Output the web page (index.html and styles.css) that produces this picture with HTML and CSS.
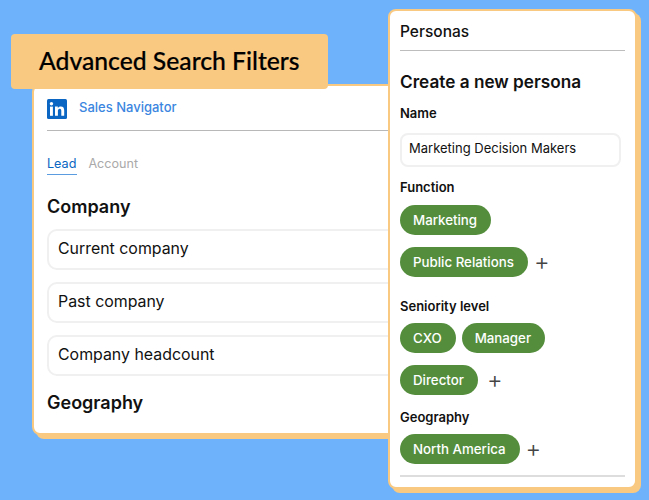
FILE: index.html
```html
<!DOCTYPE html>
<html lang="en">
<head>
    <meta charset="UTF-8" />
    <title>Advanced Search Filters</title>
    <link rel="stylesheet" href="styles.css">
</head>
<body>
    <div class="canvas">
        <!-- Search card, behind the others -->
        <section class="card search-card">
            <div class="brand">
                <svg class="logo" viewBox="0 0 20 20" width="20" height="20">
                    <rect width="20" height="20" rx="1.5" fill="#0a66c2" />
                    <rect x="3" y="7.6" width="2.9" height="9.2" fill="#fff" />
                    <circle cx="4.45" cy="4.7" r="1.7" fill="#fff" />
                    <path d="M8 7.6h2.8v1.3c.5-.9 1.6-1.5 3-1.5 2.6 0 3.4 1.6 3.4 4.1v5.3h-2.9v-4.8c0-1.2-.3-2.2-1.5-2.2-1.3 0-1.9 1-1.9 2.2v4.8H8z" fill="#fff" />
                </svg>
                <span class="brand-name">Sales Navigator</span>
            </div>
            <div class="tabs">
                <span class="tab active">Lead</span>
                <span class="tab">Account</span>
            </div>
            <h2 class="group-title">Company</h2>
            <div class="filter-row">Current company</div>
            <div class="filter-row">Past company</div>
            <div class="filter-row">Company headcount</div>
            <h2 class="group-title geo-title">Geography</h2>
        </section>

        <div class="banner">Advanced Search Filters</div>

        <!-- Persona form -->
        <section class="card persona-card">
            <div class="persona-head">Personas</div>
            <h2 class="persona-title">Create a new persona</h2>
            <div class="label">Name</div>
            <div class="name-input">Marketing Decision Makers</div>

            <div class="label function-label">Function</div>
            <div class="pills function-pills">
                <div class="pill-row">
                    <span class="pill">Marketing</span>
                </div>
                <div class="pill-row">
                    <span class="pill">Public Relations</span>
                    <span class="plus">+</span>
                </div>
            </div>

            <div class="label seniority-label">Seniority level</div>
            <div class="pills">
                <div class="pill-row">
                    <span class="pill">CXO</span>
                    <span class="pill">Manager</span>
                </div>
                <div class="pill-row">
                    <span class="pill">Director</span>
                    <span class="plus plus-wide">+</span>
                </div>
            </div>

            <div class="label geo-label">Geography</div>
            <div class="pills">
                <div class="pill-row">
                    <span class="pill">North America</span>
                    <span class="plus">+</span>
                </div>
            </div>
            <div class="persona-foot"></div>
        </section>
    </div>
</body>
</html>
```

FILE: styles.css
```css
body {
    margin: 0;
    background-color: #6eb2fb;
    font-family: Inter, "Liberation Sans", sans-serif;
    color: #111;
}

.canvas {
    position: relative;
    width: 649px;
    height: 500px;
    overflow: hidden;
}

.card {
    position: absolute;
    box-sizing: border-box;
    background-color: white;
    border: 2px solid #f9c981;
    border-radius: 8px;
    box-shadow: 4px 4px 0 #f9c981;
}

.search-card {
    left: 32px;
    top: 84px;
    width: 400px;
    height: 351px;
    padding: 0 0 0 13px;
}

.banner {
    position: absolute;
    left: 11px;
    top: 34px;
    width: 317px;
    height: 55px;
    box-sizing: border-box;
    padding: 12px 0 0 28px;
    background-color: #f9c981;
    border-radius: 4px;
    font-family: Lato, sans-serif;
    font-size: 24.7px;
    line-height: 30px;
    font-weight: 500;
    color: #000;
    -webkit-text-stroke: 0.2px #000;
}

.brand {
    display: flex;
    align-items: center;
    gap: 12px;
    box-sizing: border-box;
    height: 45px;
    border-bottom: 1px solid #b8b8b8;
}

.logo {
    margin-top: 1px;
}

.brand-name {
    margin-top: -2px;
    font-size: 13px;
    font-weight: 500;
    color: #3b86e0;
}

.tabs {
    display: flex;
    gap: 11px;
    margin-top: 25px;
    font-size: 12.6px;
    line-height: 16px;
    color: #aaa;
}

.tab {
    padding-bottom: 2px;
}

.tab.active {
    padding-right: 1px;
    color: #0a66c2;
    border-bottom: 1px solid #5b9be0;
}

.group-title {
    margin: 21px 0 11px;
    font-size: 18px;
    line-height: 22px;
    font-weight: 600;
}

.geo-title {
    margin-top: 16px;
}

.filter-row {
    box-sizing: border-box;
    height: 41px;
    margin-bottom: 12px;
    padding-left: 9px;
    border: 2px solid #f0f0f0;
    border-radius: 10px;
    font-size: 15.9px;
    line-height: 36px;
}

.persona-card {
    left: 388px;
    top: 9px;
    width: 249px;
    height: 480px;
    padding: 0 10px;
}

.persona-head {
    box-sizing: border-box;
    height: 40px;
    padding-top: 11px;
    border-bottom: 1px solid #bdbdbd;
    font-size: 15.5px;
    line-height: 20px;
    font-weight: 500;
}

.persona-title {
    margin: 20px 0 0;
    font-size: 17.2px;
    line-height: 22px;
    font-weight: 600;
}

.label {
    font-size: 13px;
    line-height: 16px;
    font-weight: 600;
}

.persona-title + .label {
    margin-top: 12px;
}

.name-input {
    box-sizing: border-box;
    width: 221px;
    height: 34px;
    margin-top: 12px;
    padding-left: 7px;
    border: 2px solid #f0f0f0;
    border-radius: 8px;
    font-size: 13px;
    line-height: 26px;
}

.function-label {
    margin-top: 12px;
}

.seniority-label {
    margin-top: 21px;
}

.geo-label {
    margin-top: 14px;
}

.pills {
    display: flex;
    flex-direction: column;
    gap: 12px;
    margin-top: 9px;
}

.function-pills {
    margin-top: 10px;
}

.pill-row {
    display: flex;
    align-items: center;
    gap: 6px;
}

.pill {
    height: 30px;
    padding: 0 14px 0 13px;
    background-color: #548e3c;
    border-radius: 15px;
    color: white;
    font-size: 13.3px;
    line-height: 30px;
    font-weight: 500;
}

.plus {
    font-size: 24px;
    font-weight: 300;
    line-height: 30px;
    color: #444;
}

.plus-wide {
    margin-left: 3px;
}

.persona-foot {
    margin-top: 11px;
    border-top: 2px solid #ddd;
}
```
